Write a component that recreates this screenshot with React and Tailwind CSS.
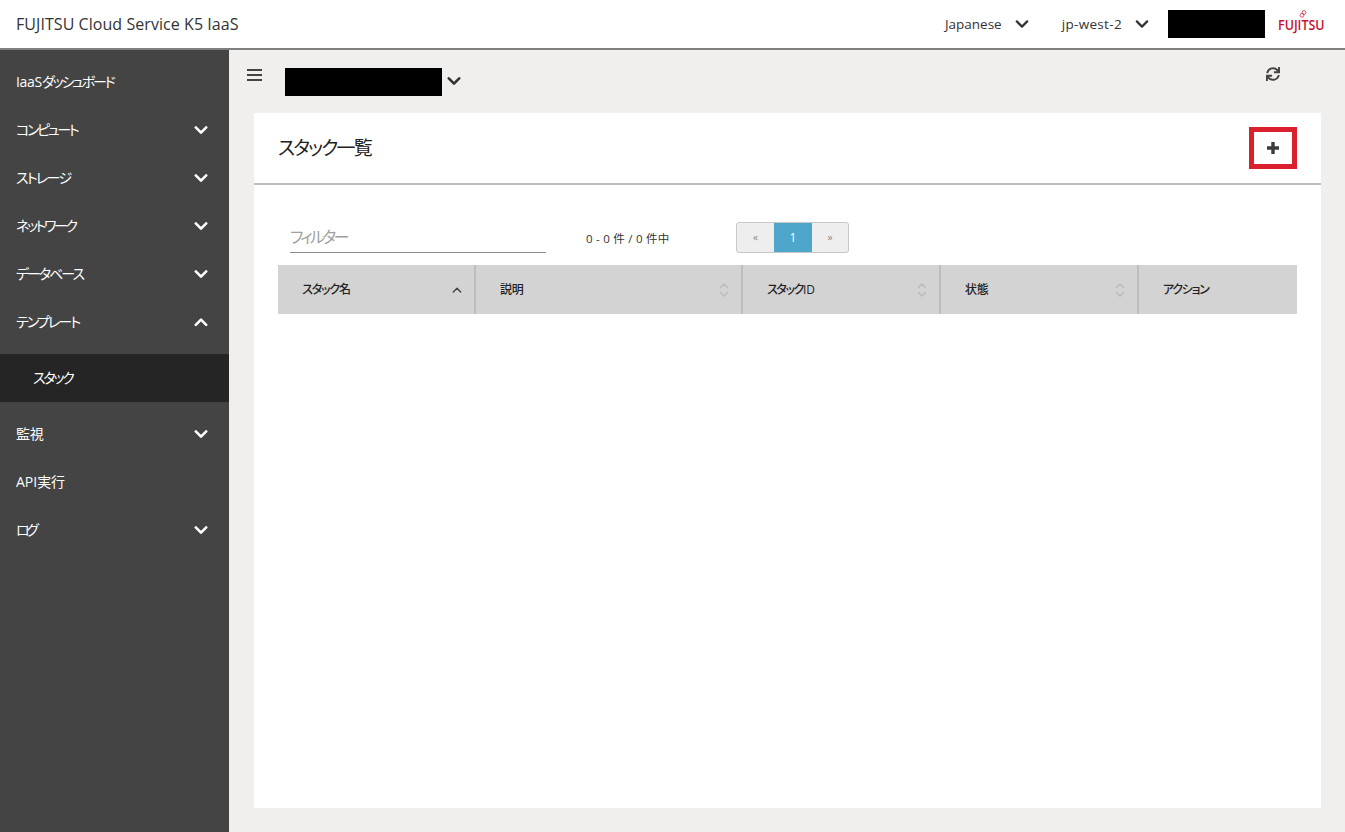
import React from "react";
import { FaSync } from "react-icons/fa";

const FONT = { fontFamily: '"Open Sans", "Noto Sans CJK JP", sans-serif' };

function Chevron({ up = false, className = "", size = 14, width = 2.6 }) {
  return (
    <svg viewBox="0 0 14 14" width={size} height={size} className={className} fill="none" stroke="currentColor" strokeWidth={width} strokeLinecap="round" strokeLinejoin="round">
      <path d={up ? "M1.8 9.8 7 4.6l5.2 5.2" : "M1.8 4.4 7 9.6l5.2-5.2"} />
    </svg>
  );
}

function SortIcon() {
  return (
    <svg viewBox="0 0 10 16" width="10" height="16" fill="none" stroke="#bcbcbc" strokeWidth="1.6" strokeLinecap="round" strokeLinejoin="round">
      <path d="M1.5 5.5 5 2l3.5 3.5M1.5 10.5 5 14l3.5-3.5" />
    </svg>
  );
}

const nav = [
  { label: <><span className="tracking-[-0.3px]">IaaS</span><span className="tracking-[-2.2px]">ダッシュボード</span></>, id: "d" },
  { label: "コンピュート", chev: "down", track: "tracking-[-2.3px]", id: "c" },
  { label: "ストレージ", chev: "down", track: "tracking-[-1.7px]", id: "s" },
  { label: "ネットワーク", chev: "down", track: "tracking-[-2.4px]", id: "n" },
  { label: "データベース", chev: "down", track: "tracking-[-2px]", id: "b" },
  { label: "テンプレート", chev: "up", track: "tracking-[-1.9px]", id: "t" },
];
const nav2 = [
  { label: "監視", chev: "down", track: "tracking-[-0.2px]", id: "m" },
  { label: <><span className="tracking-[0px]">API</span><span className="tracking-[-0.3px]">実行</span></>, id: "a" },
  { label: "ログ", chev: "down", track: "tracking-[-3.5px]", id: "l" },
];

function NavItem({ label, chev, track = "" }) {
  return (
    <div className={`h-12 flex items-center justify-between pl-4 pr-[21px] text-[14px] text-white ${track} [font-feature-settings:'palt']`}>
      <span className="-mt-[2px]">{label}</span>
      {chev && <Chevron up={chev === "up"} />}
    </div>
  );
}

const cols = [
  { id: 1, label: <span className="tracking-[-1.1px]">スタック名</span>, w: "w-[198px]", icon: <Chevron up size={10} width={2} className="text-[#444]" />, pr: "pr-[12px]" },
  { id: 2, label: <span className="tracking-[-0.3px]">説明</span>, w: "w-[267px]", icon: <SortIcon />, pr: "pr-[12px]" },
  { id: 3, label: <><span className="tracking-[-1.4px]">スタック</span><span>ID</span></>, w: "w-[198px]", icon: <SortIcon />, pr: "pr-[12px]" },
  { id: 4, label: <span className="tracking-[-0.3px]">状態</span>, w: "w-[198px]", icon: <SortIcon />, pr: "pr-[12px]" },
  { id: 5, label: <span className="tracking-[-1.3px]">アクション</span>, w: "flex-1", pr: "" },
];

export default function App() {
  return (
    <div className="w-[1345px] h-[832px] overflow-hidden flex flex-col bg-[#f0efed] text-[#333]" style={FONT}>
      <header className="h-[50px] shrink-0 bg-white border-b-2 border-[#7f7f7f] flex items-center pl-4">
        <div className="text-[16px] text-[#333] flex-1 tracking-[0.06px]">FUJITSU Cloud Service K5 IaaS</div>
        <div className="flex items-center text-[13.5px] text-[#333]">
          <span>Japanese</span>
          <Chevron className="ml-[13px] text-[#333]" size={14} width={2.2} />
          <span className="ml-[33px] tracking-[0.33px]">jp-west-2</span>
          <Chevron className="ml-[13px] text-[#333]" size={14} width={2.2} />
          <div className="ml-[19px] w-[97px] h-[28px] bg-black" />
          <div className="relative ml-[13px] mr-[21px] w-[46px] text-[15px] font-semibold leading-none text-[#c8102e]">
            <span className="block origin-left scale-x-[0.83] whitespace-nowrap">FUJITSU</span>
            <svg viewBox="0 0 8 9" width="8" height="8" className="absolute left-[21px] top-[-7px]" fill="none" stroke="#c8102e" strokeWidth="0.8">
              <circle cx="5.200" cy="2.800" r="2.100" />
              <circle cx="2.800" cy="6" r="2.100" />
            </svg>
          </div>
        </div>
      </header>

      <div className="flex flex-1 min-h-0">
        <aside className="w-[229px] shrink-0 bg-[#444444] pt-2">
          {nav.map((n) => <NavItem key={n.id} {...n} />)}
          <div className="h-12 mt-2 bg-[#252525] flex items-center pl-[33px] text-[14px] text-white tracking-[-2.2px] [font-feature-settings:'palt']"><span className="-mt-[2px]">スタック</span></div>
          <div className="h-2" />
          {nav2.map((n) => <NavItem key={n.id} {...n} />)}
        </aside>

        <main className="flex-1 min-w-0 pl-[25px] pr-6 pb-6 flex flex-col">
          <div className="h-[63px] shrink-0 flex items-start relative">
            <svg viewBox="0 0 15 12" width="15" height="12" className="mt-[19px] -ml-[7px]" fill="none" stroke="#444" strokeWidth="1.800">
              <path d="M0 1h15M0 6h15M0 11h15" />
            </svg>
            <div className="ml-[23px] mt-[18px] w-[157px] h-[28px] bg-black" />
            <Chevron className="ml-[5px] mt-[24px] text-[#333]" size={14} />
            <FaSync className="absolute right-[41px] top-[17px] text-[#444]" size={14} />
          </div>

          <section className="flex-1 bg-white flex flex-col">
            <div className="h-[72px] shrink-0 border-b-2 border-[#bdbdbd] flex items-center justify-between pl-6 pr-6">
              <h1 className="mt-[1px] text-[19px] font-normal text-[#222] tracking-[-1.8px] [font-feature-settings:'palt']">スタック一覧</h1>
              <div className="w-[48px] h-[42px] border-[5px] border-[#d9202c] flex items-center justify-center -mt-[1px]">
                <svg viewBox="0 0 12 12" width="12" height="12" fill="#3c3c3c"><path d="M4.300 0h3.400v4.300H12v3.400H7.700V12H4.300V7.700H0V4.300h4.300z" /></svg>
              </div>
            </div>

            <div className="px-6 flex flex-col">
              <div className="flex items-end h-[68px] pl-3">
                <div className="w-[256px] h-[31px] border-b border-[#8c8c8c] text-[16px] text-[#a0a0a0] tracking-[-2.7px] [font-feature-settings:'palt'] flex items-center">フィルター</div>
                <div className="ml-10 mb-[6px] w-[150px] text-[11.5px] text-[#333] tracking-[0.25px]">0 - 0 件 / 0 件中</div>
                <div className="flex h-[31px] w-[113px] rounded-[3px] border border-[#c8c8c8] overflow-hidden text-[10px] text-[#888] bg-[#eeeeee]">
                  <div className="w-[37px] flex items-center justify-center">«</div>
                  <div className="w-[38px] bg-[#4fa6cb] text-white text-[12px] flex items-center justify-center">1</div>
                  <div className="flex-1 flex items-center justify-center">»</div>
                </div>
              </div>

              <div className="mt-3 h-[49px] flex bg-[#d3d3d3] text-[12px] font-medium text-[#222] [font-feature-settings:'palt']">
                {cols.map((c, i) => (
                  <div key={c.id} className={`${c.w} pl-6 ${c.pr} ${i < 4 ? "border-r-2 border-[#bdbdbd]" : ""} flex items-center justify-between`}>
                    <span>{c.label}</span>
                    {c.icon}
                  </div>
                ))}
              </div>
            </div>
          </section>
        </main>
      </div>
    </div>
  );
}
